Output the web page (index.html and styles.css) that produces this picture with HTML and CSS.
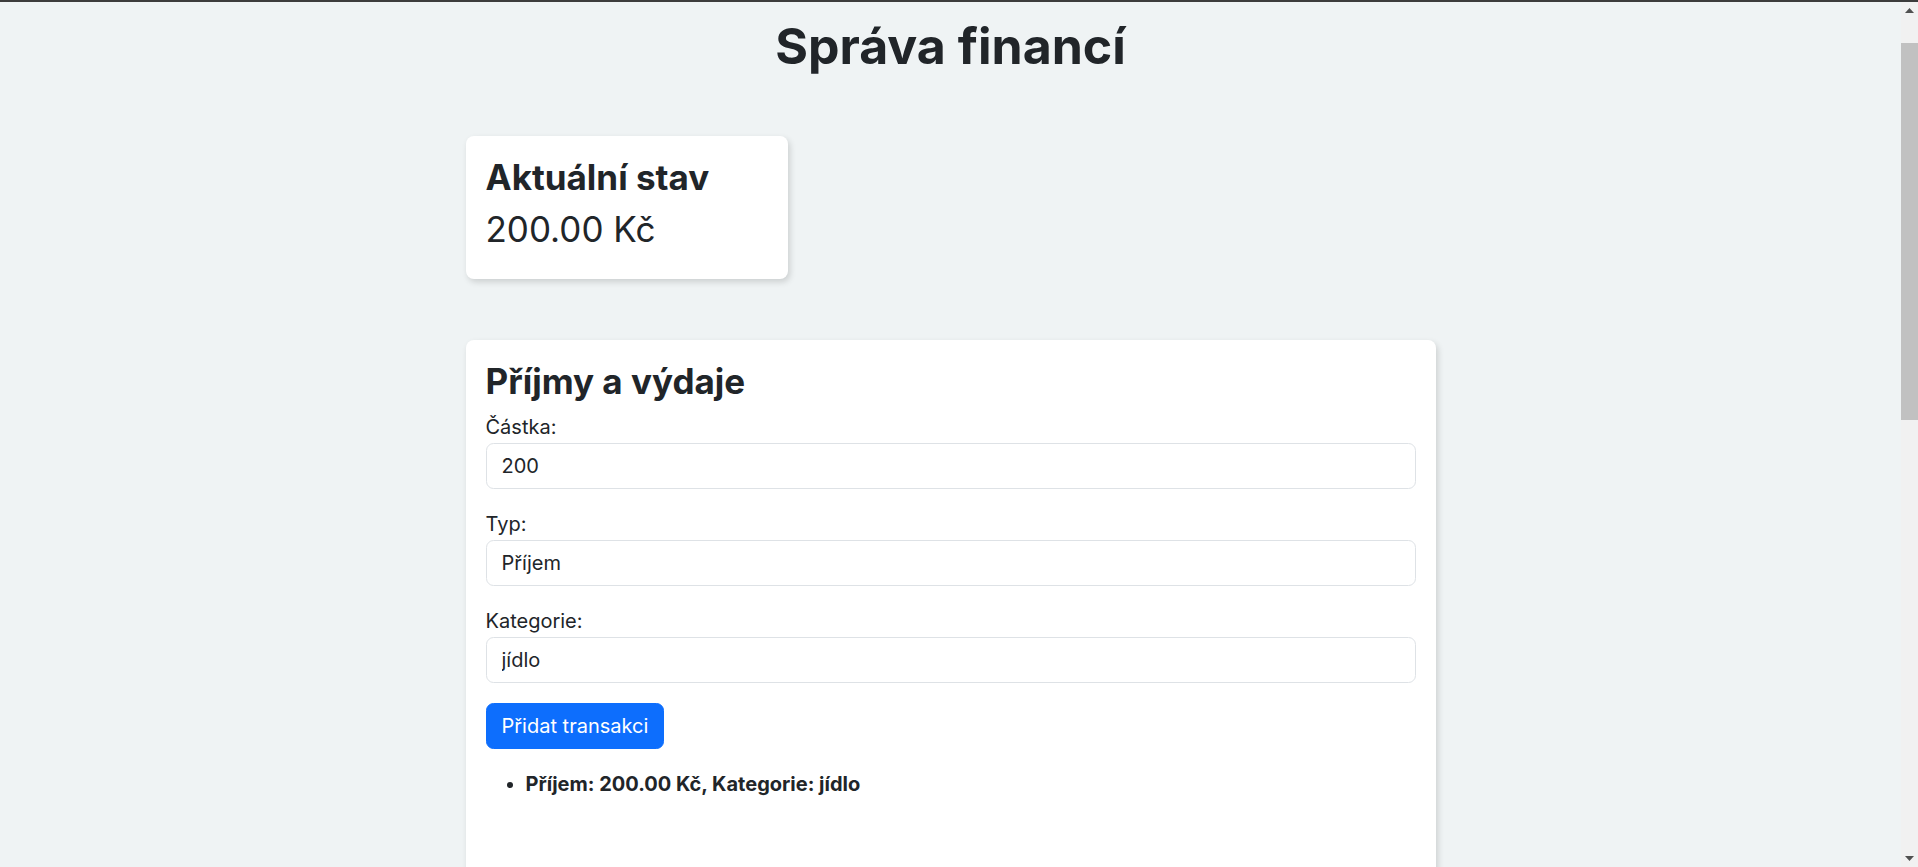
FILE: index.html
```html
<!DOCTYPE html>
<html lang="cs">
<head>
<meta charset="utf-8">
<title>Správa financí</title>
<link rel="stylesheet" href="styles.css">
</head>
<body>
<div class="page">
  <h1 class="title">Správa financí</h1>
  <main class="container">
    <section class="card balance-card">
      <h2 class="card-title">Aktuální stav</h2>
      <p class="balance">200.00 Kč</p>
    </section>
    <section class="card tx-card">
      <h2 class="card-title">Příjmy a výdaje</h2>
      <form class="tx-form">
        <div class="field">
          <label class="field-label" for="amount">Částka:</label>
          <input class="field-input" id="amount" type="text" value="200">
        </div>
        <div class="field">
          <label class="field-label" for="type">Typ:</label>
          <input class="field-input" id="type" type="text" value="Příjem">
        </div>
        <div class="field">
          <label class="field-label" for="category">Kategorie:</label>
          <input class="field-input" id="category" type="text" value="jídlo">
        </div>
        <button class="btn-primary" type="button">Přidat transakci</button>
      </form>
      <ul class="tx-list">
        <li><strong>Příjem: 200.00 Kč, Kategorie: jídlo</strong></li>
      </ul>
      <div class="chart"></div>
    </section>
  </main>
</div>
<div class="scrollbar" aria-hidden="true">
  <div class="sb-button">
    <svg width="9" height="5" viewBox="0 0 9 5"><polygon points="4.5,0 9,5 0,5" fill="#505050"/></svg>
  </div>
  <div class="sb-track">
    <div class="sb-thumb"></div>
  </div>
  <div class="sb-button">
    <svg width="9" height="5" viewBox="0 0 9 5"><polygon points="0,0 9,0 4.5,5" fill="#505050"/></svg>
  </div>
</div>
</body>
</html>
```

FILE: styles.css
```css
html {
  border-top: 2px solid #3c3c3c;
  background: #eff3f4;
}

body {
  margin: 0;
  height: calc(100vh - 2px);
  overflow: hidden;
  display: flex;
  font-family: Inter, "Noto Sans", sans-serif;
  font-size: 20px;
  line-height: 1.5;
  color: #212529;
  background: #eff3f4;
}

.page {
  flex: 1;
  min-width: 0;
  overflow: hidden;
}

.title {
  margin: 13.8px 0 0;
  font-size: 50px;
  line-height: 1.2;
  font-weight: 700;
  text-align: center;
  color: #212529;
}

.container {
  max-width: 970px;
  margin: 60.2px auto 0;
}

.card {
  background: #fff;
  border-radius: 8px;
  box-shadow: 2px 3px 6px rgba(0, 0, 0, 0.15);
  padding: 20px;
  box-sizing: border-box;
}

.balance-card {
  width: 322px;
}

.tx-card {
  margin-top: 61px;
}

.card-title {
  margin: 0 0 10px;
  font-size: 35px;
  line-height: 1.2;
  font-weight: 700;
}

.balance {
  margin: 0 0 9px;
  font-size: 35px;
  line-height: 1.2;
}

.tx-form {
  margin: 0;
}

.field {
  margin-bottom: 20px;
}

.field-label {
  display: block;
  line-height: 30px;
}

.field-input {
  display: block;
  width: 100%;
  box-sizing: border-box;
  margin: 1px 0 0;
  padding: 7px 15px;
  font: inherit;
  line-height: 30px;
  color: #212529;
  background: #fff;
  border: 1px solid #dee2e6;
  border-radius: 7.5px;
  outline: none;
}

.btn-primary {
  display: inline-block;
  font: inherit;
  line-height: 30px;
  padding: 7px 15px;
  color: #fff;
  background: #0d6efd;
  border: 1px solid #0d6efd;
  border-radius: 7.5px;
  cursor: pointer;
}

.tx-list {
  margin: 20px 0;
  padding-left: 40px;
}

.tx-list strong {
  font-weight: 700;
}

.chart {
  height: 400px;
}

.scrollbar {
  flex: none;
  width: 17px;
  display: flex;
  flex-direction: column;
  background: #f1f1f1;
}

.sb-button {
  flex: none;
  height: 17px;
  display: flex;
  align-items: center;
  justify-content: center;
}

.sb-track {
  flex: 1;
}

.sb-thumb {
  margin-top: 24px;
  height: 377px;
  background: #c1c1c1;
}
```
